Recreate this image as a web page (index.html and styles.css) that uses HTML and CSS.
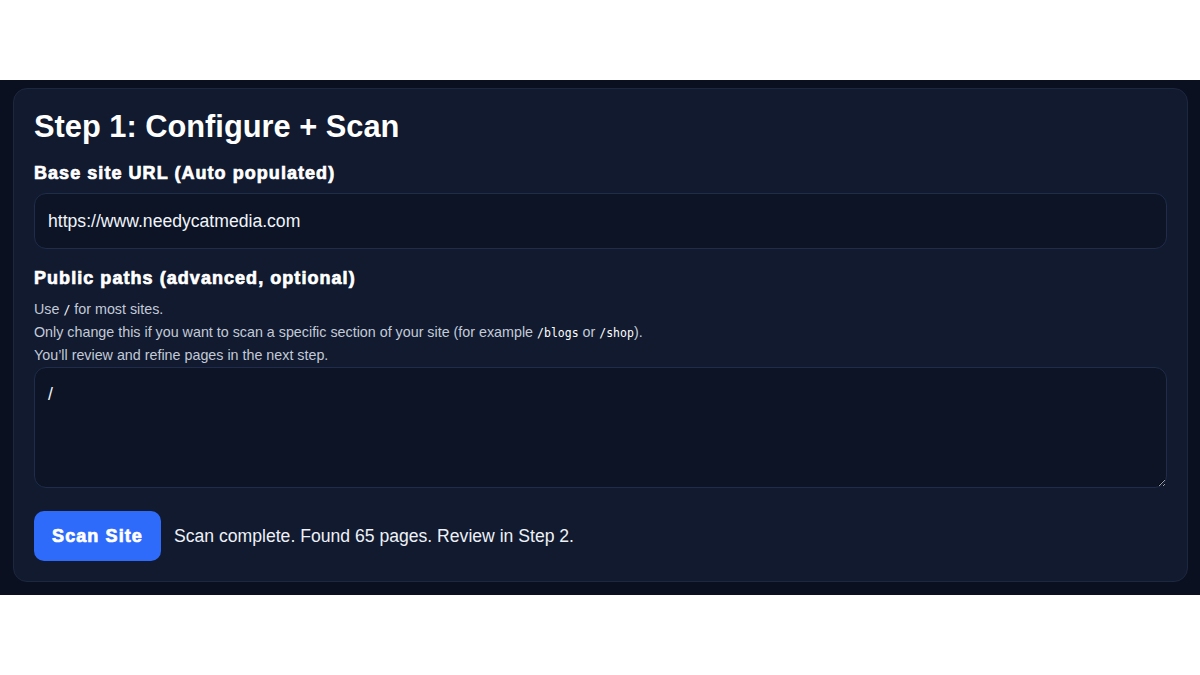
FILE: index.html
```html
<!DOCTYPE html>
<html lang="en">
<head>
    <meta charset="UTF-8">
    <meta name="viewport" content="width=device-width, initial-scale=1.0">
    <title>Site Scanner - Step 1</title>
    <link rel="stylesheet" href="styles.css">
</head>
<body>
    <div class="page">
        <div class="card">
            <h1>Step 1: Configure + Scan</h1>

            <label class="field-label" for="baseUrl">Base site URL (Auto populated)</label>
            <input id="baseUrl" class="text-input" type="text" value="https://www.needycatmedia.com">

            <label class="field-label paths-label" for="paths">Public paths (advanced, optional)</label>
            <div class="help">
                <p>Use <code>/</code> for most sites.</p>
                <p>Only change this if you want to scan a specific section of your site (for example <code>/blogs</code> or <code>/shop</code>).</p>
                <p>You’ll review and refine pages in the next step.</p>
            </div>
            <textarea id="paths" class="text-area">/</textarea>

            <div class="actions">
                <button class="scan-btn">Scan Site</button>
                <span class="status">Scan complete. Found 65 pages. Review in Step 2.</span>
            </div>
        </div>
    </div>
</body>
</html>
```

FILE: styles.css
```css
* {
    margin: 0;
    padding: 0;
    box-sizing: border-box;
}

body {
    font-family: "Liberation Sans", Arial, sans-serif;
    background: #fff;
    color: #e8ecf5;
}

.page {
    margin-top: 80px;
    background: #0b1020;
    padding: 8px 12px 13px 13px;
}

.card {
    background: #111a2f;
    border: 1px solid #1c2740;
    border-radius: 14px;
    padding: 20px 20px 20px 20px;
    display: flex;
    flex-direction: column;
}

.card h1 {
    font-size: 30.8px;
    font-weight: bold;
    color: #fff;
    line-height: 35px;
    margin-bottom: 19px;
}

/* heavy labels, a touch wider than plain bold */
.field-label {
    display: block;
    font-size: 18px;
    font-weight: bold;
    color: #fff;
    line-height: 21px;
    letter-spacing: 1.05px;
    margin-bottom: 9px;
    -webkit-text-stroke: 0.7px #fff;
}

.paths-label {
    margin-top: 19px;
    margin-bottom: 9px;
}

.text-input,
.text-area {
    width: 100%;
    background: #0c1425;
    border: 1px solid #1f2c4a;
    border-radius: 12px;
    color: #f1f4fa;
    font-family: "Liberation Sans", Arial, sans-serif;
    font-size: 17.6px;
    outline: none;
}

.text-input {
    height: 56px;
    padding: 0 13px;
}

.text-area {
    height: 121px;
    padding: 16px 13px 14px;
    resize: vertical;
}

.help {
    font-size: 14.3px;
    color: #c3cad8;
    line-height: 23px;
}

.help code {
    font-family: "DejaVu Sans Mono", monospace;
    font-size: 11.5px;
    line-height: 1;
    color: #fff;
}

.actions {
    display: flex;
    align-items: center;
    gap: 13px;
    margin-top: 23px;
}

.scan-btn {
    background: #2f6bfb;
    color: #fff;
    border: none;
    border-radius: 10px;
    width: 127px;
    height: 50px;
    font-family: "Liberation Sans", Arial, sans-serif;
    font-size: 18px;
    font-weight: bold;
    letter-spacing: 1.1px;
    -webkit-text-stroke: 0.7px #fff;
    cursor: pointer;
}

.status {
    font-size: 17.6px;
    color: #eef1f7;
}
```
